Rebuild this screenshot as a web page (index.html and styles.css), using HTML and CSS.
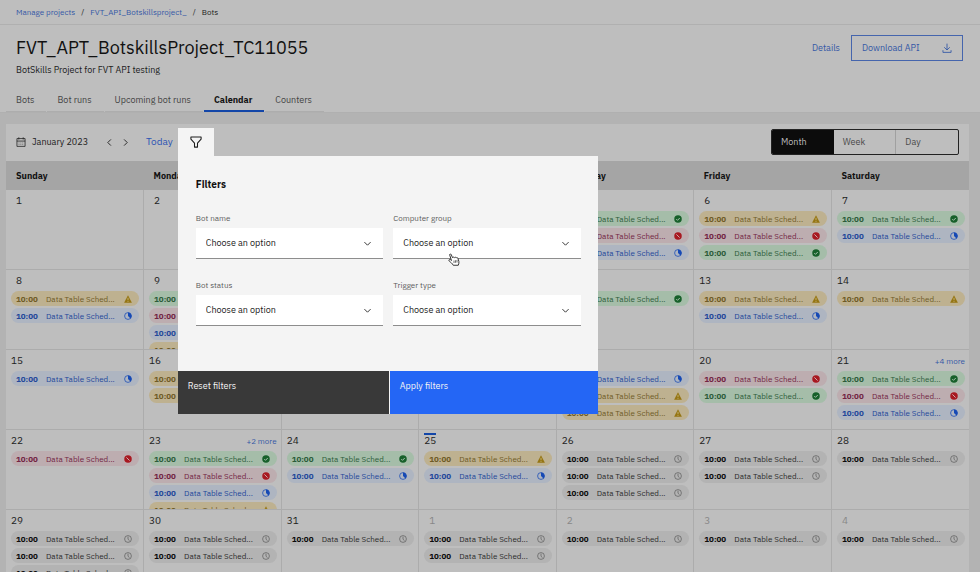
FILE: index.html
```html
<!DOCTYPE html>
<html lang="en">
<head>
  <meta charset="UTF-8" />
  <meta name="viewport" content="width=device-width, initial-scale=1" />
  <title>FVT_APT_BotskillsProject_TC11055</title>
  <link rel="stylesheet" href="styles.css">
</head>
<body>

  <!-- Shared icons -->
  <svg class="sprite" aria-hidden="true">
    <symbol id="icon-success" viewBox="0 0 16 16">
      <circle cx="8" cy="8" r="7.5" fill="currentColor" />
      <path d="M4.5 8.2l2.5 2.5 4.5-4.7" fill="none" stroke="#bdd0c0" stroke-width="1.7" />
    </symbol>
    <symbol id="icon-failed" viewBox="0 0 16 16">
      <circle cx="8" cy="8" r="7.5" fill="currentColor" />
      <path d="M4.8 4.8l6.4 6.4" fill="none" stroke="#d0b9bc" stroke-width="1.8" />
    </symbol>
    <symbol id="icon-warning" viewBox="0 0 16 16">
      <path d="M8 0.5L15.8 15.5H0.2z" fill="currentColor" />
      <path d="M8 5.5v5M8 12v1.7" fill="none" stroke="#cfc18f" stroke-width="1.5" />
    </symbol>
    <symbol id="icon-running" viewBox="0 0 16 16">
      <circle cx="8" cy="8" r="6.8" fill="none" stroke="currentColor" stroke-width="1.5" />
      <path d="M8 1a7 7 0 0 1 5 12L8 8z" fill="currentColor" />
    </symbol>
    <symbol id="icon-pending" viewBox="0 0 16 16">
      <circle cx="8" cy="8" r="6.8" fill="none" stroke="currentColor" stroke-width="1.3" />
      <path d="M8 3.5v5l3 2.8" fill="none" stroke="currentColor" stroke-width="1.3" />
    </symbol>
    <symbol id="icon-chevron" viewBox="0 0 16 16">
      <path d="M2.5 5.5L8 11l5.5-5.5" fill="none" stroke="currentColor" stroke-width="1.6" />
    </symbol>
  </svg>

  <!-- Breadcrumb -->
  <nav class="breadcrumb" aria-label="Breadcrumb">
    <a href="#">Manage projects</a>
    <span>/</span>
    <a href="#">FVT_API_Botskillsproject_</a>
    <span>/</span>
    <span>Bots</span>
  </nav>

  <!-- Project header -->
  <header class="project-header">
    <div class="project-top">
      <div>
        <h1>FVT_APT_BotskillsProject_TC11055</h1>
        <p class="subtitle">BotSkills Project for FVT API testing</p>
      </div>
      <div class="project-actions">
        <a class="details-link" href="#">Details</a>
        <button class="download-btn" type="button">
          Download API
          <svg viewBox="0 0 16 16" width="10" height="10" aria-hidden="true">
            <path d="M8 1v10M3.5 6.8L8 11.2l4.5-4.4M1.5 11.5V15h13v-3.5" fill="none" stroke="currentColor" stroke-width="1.4" />
          </svg>
        </button>
      </div>
    </div>
    <nav class="tabs" aria-label="Project">
      <a class="tab" href="#">Bots</a>
      <a class="tab" href="#">Bot runs</a>
      <a class="tab" href="#">Upcoming bot runs</a>
      <a class="tab active" href="#">Calendar</a>
      <a class="tab" href="#">Counters</a>
    </nav>
  </header>

  <!-- Calendar -->
  <main class="calendar">
    <div class="toolbar">
      <div class="month-label">
        <svg viewBox="0 0 16 16" width="10" height="10" aria-hidden="true">
          <path d="M1.5 2.5h13v12.5h-13zM1.5 6.5h13M4.5 0.5v3.5M11.5 0.5v3.5" fill="none" stroke="currentColor" stroke-width="1.2" />
          <path d="M4 9.5h8M4 12h8" fill="none" stroke="currentColor" stroke-width="0.6" stroke-dasharray="1.5 1.5" />
        </svg>
        January 2023
      </div>
      <div class="month-nav">
        <button type="button" aria-label="Previous month"><svg class="chev-left" width="9" height="9"><use href="#icon-chevron" /></svg></button>
        <button type="button" aria-label="Next month"><svg class="chev-right" width="9" height="9"><use href="#icon-chevron" /></svg></button>
      </div>
      <button class="today-btn" type="button">Today</button>

      <div class="filter">
        <button class="filter-tab" type="button" aria-label="Filters" aria-expanded="true">
          <svg viewBox="0 0 16 16" width="12" height="12" aria-hidden="true">
            <path d="M1.2 1.2h13.6v3L10 9.5v5.3H6V9.5L1.2 4.2z" fill="none" stroke="currentColor" stroke-width="1.4" stroke-linejoin="round" />
          </svg>
        </button>

        <form class="filter-panel">
          <div class="filter-body">
            <h2>Filters</h2>
            <div class="filter-grid">
              <div class="field">
                <label for="bot-name">Bot name</label>
                <div class="select">
                  <select id="bot-name"><option>Choose an option</option></select>
                  <svg width="9" height="9" aria-hidden="true"><use href="#icon-chevron" /></svg>
                </div>
              </div>
              <div class="field">
                <label for="computer-group">Computer group</label>
                <div class="select">
                  <select id="computer-group"><option>Choose an option</option></select>
                  <svg width="9" height="9" aria-hidden="true"><use href="#icon-chevron" /></svg>
                  <!-- hand pointer -->
                  <svg class="pointer" viewBox="0 0 24 26" width="12" height="13" aria-hidden="true">
                    <path d="M7 15L3.5 4.5C2.6 1.8 5.6 0.8 6.6 3.4L9 9.5c0.6-1.6 3-1.7 3.8-0.2 0.9-1.3 3-1.2 3.7 0.4 1-1 3-0.6 3.4 1.2l1.8 6c0.6 2.2-0.2 5-1.2 7.6H10.5C8.5 20.5 5 18.5 2.5 16.2 0.5 14.2 3 12 5 13.3z" fill="#fff" stroke="#222" stroke-width="1.8" />
                    <path d="M12 15v5M15 14.5v5M18 14v5" fill="none" stroke="#222" stroke-width="1.3" />
                  </svg>
                </div>
              </div>
              <div class="field">
                <label for="bot-status">Bot status</label>
                <div class="select">
                  <select id="bot-status"><option>Choose an option</option></select>
                  <svg width="9" height="9" aria-hidden="true"><use href="#icon-chevron" /></svg>
                </div>
              </div>
              <div class="field">
                <label for="trigger-type">Trigger type</label>
                <div class="select">
                  <select id="trigger-type"><option>Choose an option</option></select>
                  <svg width="9" height="9" aria-hidden="true"><use href="#icon-chevron" /></svg>
                </div>
              </div>
            </div>
          </div>
          <div class="filter-actions">
            <button class="reset-btn" type="reset">Reset filters</button>
            <button class="apply-btn" type="button">Apply filters</button>
          </div>
        </form>
      </div>

      <div class="view-switch">
        <button class="selected" type="button">Month</button>
        <button type="button">Week</button>
        <button type="button">Day</button>
      </div>
    </div>

    <table class="month">
      <thead>
        <tr>
          <th>Sunday</th>
          <th>Monday</th>
          <th>Tuesday</th>
          <th>Wednesday</th>
          <th>Thursday</th>
          <th>Friday</th>
          <th>Saturday</th>
        </tr>
      </thead>
      <tbody id="month-body"></tbody>
    </table>
  </main>

  <script>
    // Bot runs per day, in the order they are listed
    const runs = {
      5: ['success', 'failed', 'running'],
      6: ['warning', 'failed', 'success'],
      7: ['success', 'running'],
      8: ['warning', 'running'],
      9: ['success', 'failed', 'running', 'warning'],
      12: ['success'],
      13: ['warning', 'running'],
      14: ['warning'],
      15: ['running'],
      16: ['warning', 'warning'],
      19: ['running', 'warning', 'warning'],
      20: ['failed', 'success'],
      21: ['success', 'failed', 'running'],
      22: ['failed'],
      23: ['success', 'failed', 'running', 'warning'],
      24: ['success', 'running'],
      25: ['warning', 'running'],
      26: ['pending', 'pending', 'pending'],
      27: ['pending', 'pending'],
      28: ['pending'],
      29: ['pending', 'pending', 'pending'],
      30: ['pending', 'pending'],
      31: ['pending'],
      32: ['pending', 'pending'],
      33: ['pending'],
      34: ['pending'],
      35: ['pending']
    };
    const more = { 21: 4, 23: 2 };
    const today = 25;
    const daysInMonth = 31;

    function runHtml(status) {
      return `<li class="run ${status}">
        <b>10:00</b>
        <span>Data Table Sched...</span>
        <svg width="8" height="8" aria-label="${status}"><use href="#icon-${status}" /></svg>
      </li>`;
    }

    function dayHtml(n) {
      const other = n > daysInMonth;
      const label = other ? n - daysInMonth : n;
      const cls = other ? 'other' : n === today ? 'today' : '';
      const link = more[n] ? `<a class="more" href="#">+${more[n]} more</a>` : '';
      return `<td><div class="day">
        <div class="day-head"><span class="num ${cls}">${label}</span>${link}</div>
        <ul>${(runs[n] || []).map(runHtml).join('')}</ul>
      </div></td>`;
    }

    const body = document.getElementById('month-body');
    for (let week = 0; week < 5; week++) {
      const row = document.createElement('tr');
      for (let d = 1; d <= 7; d++) {
        row.innerHTML += dayHtml(week * 7 + d);
      }
      body.appendChild(row);
    }
  </script>

</body>
</html>
```
FILE: styles.css
```css
/* Basic page styling */
* {
  box-sizing: border-box;
  margin: 0;
  padding: 0;
}
body {
  height: 100vh;
  overflow: hidden;
  background: #b3b3b3;
  color: #1c1c1c;
  font-family: "IBM Plex Sans", Roboto, sans-serif;
  font-size: 9px;
  line-height: 12px;
}
a {
  color: #3458a6;
  text-decoration: none;
}
button,
select {
  font: inherit;
  color: inherit;
  background: none;
  border: 0;
  border-radius: 0;
  cursor: pointer;
}
svg {
  flex: none;
  display: block;
}
.sprite {
  display: none;
}

/* Breadcrumb */
.breadcrumb {
  display: flex;
  gap: 6px;
  padding: 6px 16px;
  font-size: 8px;
  background: #bebebe;
  border-bottom: 1px solid #b0b0b0;
}

/* Project header */
.project-header {
  background: #bebebe;
  border-bottom: 1px solid #b0b0b0;
}
.project-top {
  display: flex;
  justify-content: space-between;
  padding: 10px 17px 0 16px;
}
h1 {
  font-size: 18px;
  font-weight: 400;
  line-height: 26px;
  color: #111;
}
.subtitle {
  margin-top: 3px;
}
.project-actions {
  display: flex;
  align-items: center;
  gap: 11px;
  height: 26px;
}
.download-btn {
  display: flex;
  align-items: center;
  justify-content: space-between;
  width: 112px;
  height: 26px;
  padding: 0 10px;
  color: #3458a6;
  border: 1px solid #4565ad;
}
.tabs {
  display: flex;
  gap: 1px;
  margin-top: 12px;
  padding-left: 6px;
}
.tab {
  padding: 6px 12px 5px 10px;
  color: #444;
  border-bottom: 1px solid #adadad;
}
.tab.active {
  padding-bottom: 4px;
  font-weight: 700;
  color: #111;
  border-bottom: 2px solid #1346a8;
}

/* Calendar toolbar */
.calendar {
  margin: 11px 11px 0 6px;
  background: #bebebe;
}
.toolbar {
  display: flex;
  align-items: center;
  padding: 4px 10px 5px;
}
.month-label {
  display: flex;
  align-items: center;
  gap: 6px;
}
.month-nav {
  display: flex;
  gap: 7px;
  margin: 0 16px 0 17px;
}
.chev-left {
  transform: rotate(90deg);
}
.chev-right {
  transform: rotate(-90deg);
}
.today-btn {
  font-size: 10px;
  color: #2c54b4;
}
.view-switch {
  display: flex;
  width: 188px;
  margin-left: auto;
  border: 1px solid #222;
  border-radius: 2px;
  overflow: hidden;
}
.view-switch button {
  flex: 1;
  height: 24px;
  padding: 0 9px;
  text-align: left;
  color: #4a4a4a;
}
.view-switch button + button + button {
  border-left: 1px solid #a0a0a0;
}
.view-switch .selected {
  color: #bebebe;
  background: #0c0c0c;
}

/* Filter popover */
.filter {
  position: relative;
  margin-left: 5px;
}
.filter-tab {
  display: flex;
  align-items: center;
  justify-content: center;
  width: 36px;
  height: 28px;
  background: #f4f4f4;
}
.filter-panel {
  position: absolute;
  top: 100%;
  left: 0;
  z-index: 10;
  width: 420px;
  color: #222;
  background: #f4f4f4;
}
.filter-body {
  padding: 23px 17px 45px 18px;
}
.filter-body h2 {
  font-size: 10px;
  font-weight: 700;
  line-height: 12px;
  color: #111;
}
.filter-grid {
  display: grid;
  grid-template-columns: 1fr 1fr;
  gap: 20px 10px;
  margin-top: 21px;
}
.field label {
  display: block;
  margin-bottom: 4px;
  font-size: 8px;
  color: #5c5c5c;
}
.select {
  position: relative;
}
.select select {
  display: block;
  width: 100%;
  height: 31px;
  padding: 0 10px;
  appearance: none;
  background: #fff;
  border-bottom: 1px solid #8d8d8d;
}
.select svg {
  position: absolute;
  top: 11px;
  right: 11px;
  pointer-events: none;
}
.select .pointer {
  top: 25px;
  left: 55px;
}
.filter-actions {
  display: grid;
  grid-template-columns: 1fr 208px;
  gap: 1px;
}
.filter-actions button {
  padding: 9px 10px 22px;
  text-align: left;
  color: #f4f4f4;
}
.filter-actions .reset-btn {
  background: #393939;
}
.filter-actions .apply-btn {
  background: #2466f5;
}

/* Month table */
.month {
  width: 100%;
  table-layout: fixed;
  border-collapse: collapse;
}
.month th {
  height: 29px;
  padding-left: 10px;
  text-align: left;
  color: #111;
  background: #a5a5a5;
}
.month td {
  padding: 0;
  border-bottom: 1px solid #acacac;
}
.month td + td {
  border-left: 1px solid #acacac;
}
.day {
  height: 79px;
  padding: 5px 4px 0 5px;
  overflow: hidden;
}
.day-head {
  display: flex;
  justify-content: space-between;
  font-size: 10px;
}
.num {
  min-width: 11px;
  text-align: right;
}
.num.other {
  color: #888;
}
.num.today {
  box-shadow: 0 -2px 0 #1346a8;
}
.more {
  font-size: 8px;
}
.day ul {
  display: grid;
  gap: 2px;
  margin-top: 4px;
  list-style: none;
}
.run {
  display: flex;
  align-items: center;
  height: 15px;
  padding: 0 7px 0 5px;
  font-size: 8px;
  white-space: nowrap;
  border-radius: 8px;
}
.run b {
  width: 30px;
}
.run svg {
  margin-left: auto;
}

/* Run status colours */
.success {
  color: #2c5c39;
  background: #a5bda9;
}
.success svg {
  color: #17602a;
}
.failed {
  color: #722443;
  background: #bdadb0;
}
.failed svg {
  color: #a81820;
}
.warning {
  color: #6e5b26;
  background: #beb190;
}
.warning svg {
  color: #957512;
}
.running {
  color: #23479a;
  background: #aeb5c1;
}
.running svg {
  color: #1549b5;
}
.pending {
  color: #2b2b2b;
  background: #b3b3b3;
}
.pending b {
  color: #0c0c0c;
}
.pending svg {
  color: #555;
}
```
